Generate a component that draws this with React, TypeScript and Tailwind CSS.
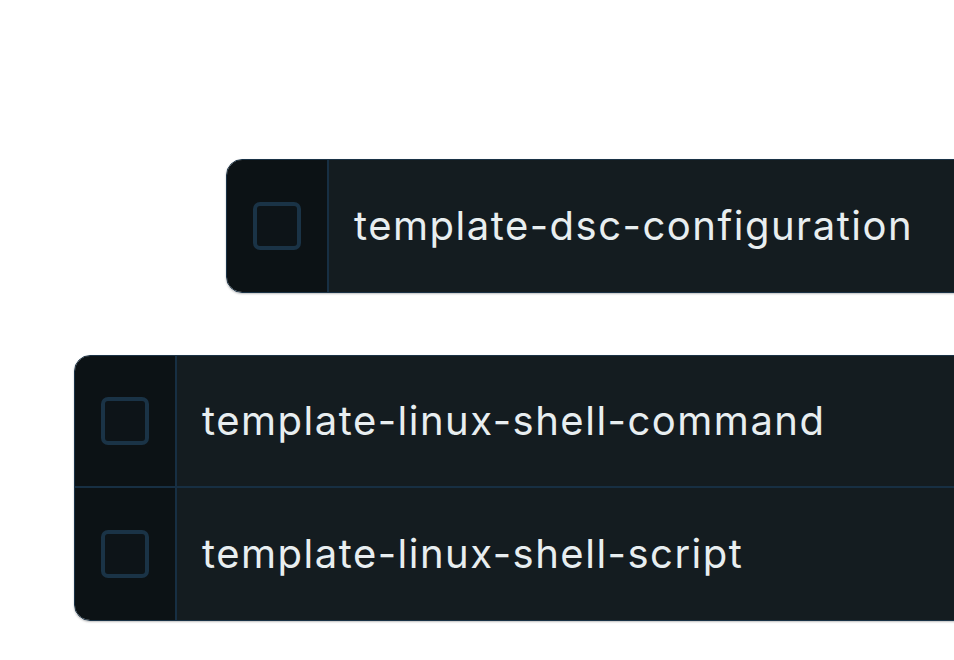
import * as React from "react";

const font = { fontFamily: "Inter, 'Noto Sans', sans-serif" };

function Row({ label, last }: { label: string; last?: boolean }) {
	return (
		<div className={`flex ${last ? "h-[132px]" : "h-[132px] border-b-2 border-[#172f43]"}`}>
			<div className="w-[102px] shrink-0 bg-[#0c1215] border-r-2 border-[#172f43] flex items-center justify-center">
				<div className="w-[48px] h-[48px] rounded-[7px] border-[4px] border-[#1a3346] bg-[#0d1418]"></div>
			</div>
			<div className="flex-1 bg-[#141c20] flex items-center pl-[25px]">
				<span className="text-[40px] text-[#e8eef0] whitespace-nowrap tracking-[1.5px]" style={font}>
					{label}
				</span>
			</div>
		</div>
	);
}

export default function App() {
	return (
		<div className="w-[954px] h-[660px] bg-white overflow-hidden pt-[159px]">
			<div className="ml-[226px] w-[800px] rounded-l-2xl overflow-hidden border border-[#1a3246] shadow-[0_1px_2px_rgba(0,0,0,0.25)]">
				<Row label="template-dsc-configuration" last />
			</div>
			<div className="ml-[74px] mt-[62px] w-[950px] rounded-l-2xl overflow-hidden border border-[#1a3246] shadow-[0_1px_2px_rgba(0,0,0,0.25)]">
				<Row label="template-linux-shell-command" />
				<Row label="template-linux-shell-script" last />
			</div>
		</div>
	);
}
